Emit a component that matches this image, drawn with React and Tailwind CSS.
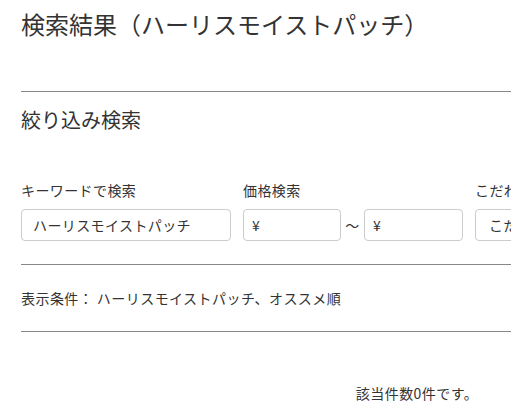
export default function App() {
  const font = { fontFamily: '"Noto Sans CJK JP", "Noto Sans", sans-serif' };
  return (
    <div className="w-[511px] h-[417px] overflow-hidden bg-white text-[#333]" style={font}>
      <div className="w-[813px] pl-[21px]">
        <div className="h-[91px] pt-[12px]">
          <h1 className="text-[24px] leading-none font-normal">検索結果（ハーリスモイストパッチ）</h1>
        </div>
        <div className="border-t border-[#888]" />
        <div className="pt-[18px] h-[91px]">
          <h2 className="text-[20px] leading-none font-normal">絞り込み検索</h2>
        </div>
        <div className="flex gap-[12px] h-[81px] text-[14px] tracking-[0.4px]">
          <div className="w-[210px]">
            <div className="leading-none h-[26px]">キーワードで検索</div>
            <div className="h-[32px] border border-[#ccc] rounded-[4px] flex items-center px-[11px]">
              ハーリスモイストパッチ
            </div>
          </div>
          <div>
            <div className="leading-none h-[26px]">価格検索</div>
            <div className="flex items-center">
              <div className="w-[98px] h-[32px] border border-[#ccc] rounded-[4px] flex items-center px-[8px]">¥</div>
              <div className="w-[23px] flex justify-center">〜</div>
              <div className="w-[99px] h-[32px] border border-[#ccc] rounded-[4px] flex items-center px-[8px]">¥</div>
            </div>
          </div>
          <div className="w-[210px]">
            <div className="leading-none h-[26px]">こだわり検索</div>
            <div className="h-[32px] border border-[#ccc] rounded-[4px] flex items-center px-[13px]">
              こだわり条件を選択
            </div>
          </div>
        </div>
        <div className="border-t border-[#888]" />
        <div className="h-[66px] pt-[26px]">
          <p className="text-[14px] leading-none tracking-[0.45px]">表示条件：&nbsp;ハーリスモイストパッチ、オススメ順</p>
        </div>
        <div className="border-t border-[#888]" />
        <div className="pt-[54px]">
          <p className="text-[14px] leading-none tracking-[0.45px] text-center">該当件数0件です。</p>
        </div>
      </div>
    </div>
  );
}
